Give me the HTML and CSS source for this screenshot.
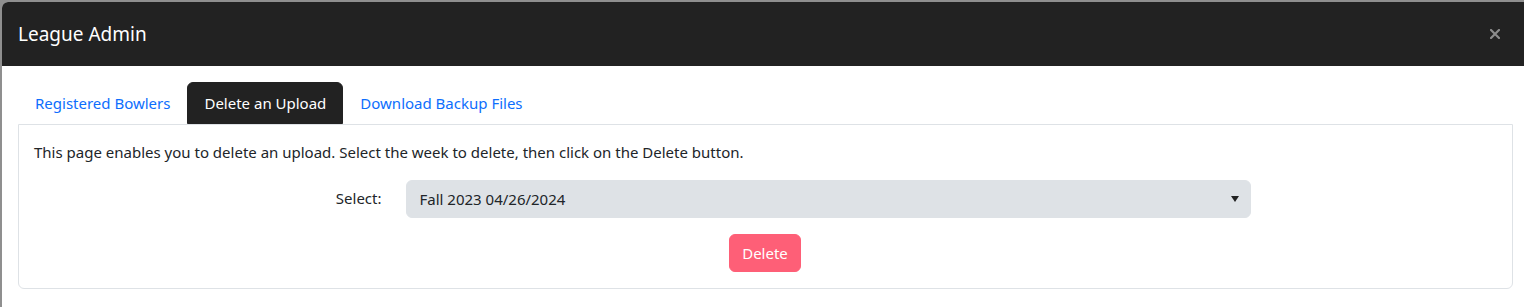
FILE: index.html
```html
<!DOCTYPE html>
<html lang="en">
<head>
<meta charset="utf-8">
<title>League Admin</title>
<link rel="stylesheet" href="styles.css">
</head>
<body>
<div class="modal">
  <div class="modal-header">
    <h5 class="modal-title">League Admin</h5>
    <button class="btn-close" type="button" aria-label="Close">
      <svg viewBox="0 0 10 10" width="10" height="10"><path d="M1 1L9 9M9 1L1 9" stroke="#8c8c8c" stroke-width="2.2" stroke-linecap="square"/></svg>
    </button>
  </div>
  <div class="modal-body">
    <ul class="nav-tabs">
      <li><a class="nav-link" href="#">Registered Bowlers</a></li>
      <li><a class="nav-link active" href="#">Delete an Upload</a></li>
      <li><a class="nav-link" href="#">Download Backup Files</a></li>
    </ul>
    <div class="tab-content">
      <p class="intro">This page enables you to delete an upload. Select the week to delete, then click on the Delete button.</p>
      <div class="form-row">
        <label class="col-label">Select:</label>
        <div class="col-select">
          <div class="form-select">
            <span>Fall 2023 04/26/2024</span>
            <svg class="caret" viewBox="0 0 8 6" width="8" height="6"><path d="M0 0H8L4 6Z" fill="#222"/></svg>
          </div>
        </div>
      </div>
      <div class="actions">
        <button class="btn-delete" type="button">Delete</button>
      </div>
    </div>
  </div>
</div>
</body>
</html>
```
FILE: styles.css
```css
html, body {
  margin: 0;
  padding: 0;
  height: 100%;
  overflow: hidden;
}
body {
  background: #8f8f8f;
  font-family: "Noto Sans", "Open Sans", sans-serif;
  font-size: 15px;
  color: #212529;
}
.modal {
  margin: 2px 0 0 2px;
  width: 1527px;
  height: 320px;
  background: #fff;
  border-top-left-radius: 6px;
  overflow: hidden;
}
.modal-header {
  background: #222222;
  height: 64px;
  box-sizing: border-box;
  padding: 0 16px;
  display: flex;
  align-items: center;
}
.modal-title {
  margin: 0;
  font-size: 19px;
  font-weight: 400;
  color: #ffffff;
  line-height: 30px;
}
.btn-close {
  margin-left: auto;
  margin-right: 6px;
  width: 24px;
  height: 24px;
  padding: 0;
  border: 0;
  background: transparent;
  display: flex;
  align-items: center;
  justify-content: center;
}
.modal-body {
  padding: 16px;
}
.nav-tabs {
  list-style: none;
  margin: 0;
  padding: 0;
  display: flex;
}
.nav-link {
  display: block;
  padding: 8px 16px;
  border: 1px solid transparent;
  border-radius: 6px 6px 0 0;
  line-height: 24px;
  color: #0d6efd;
  text-decoration: none;
}
.nav-link.active {
  background: #222222;
  border-color: #222222;
  color: #ffffff;
}
.tab-content {
  border: 1px solid #dee2e6;
  border-radius: 0 0 6px 6px;
  padding: 15px 16px 16px 15px;
}
.intro {
  margin: 0 0 16px 0;
  line-height: 24px;
}
.form-row {
  display: flex;
  margin: 0 -12px 16px -12px;
}
.col-label {
  box-sizing: border-box;
  flex: 0 0 25%;
  padding: 6px 12px 0 12px;
  text-align: right;
  line-height: 24px;
}
.col-select {
  box-sizing: border-box;
  flex: 0 0 58.5%;
  padding: 0 12px;
}
.form-select {
  height: 38px;
  box-sizing: border-box;
  background: #dee2e6;
  border: 1px solid #dee2e6;
  border-radius: 6px;
  padding: 0 11px 0 13px;
  display: flex;
  align-items: center;
  justify-content: space-between;
}
.caret {
  display: block;
}
.actions {
  display: flex;
  justify-content: center;
}
.btn-delete {
  font-family: inherit;
  font-size: 15px;
  line-height: 24px;
  padding: 6px 12px;
  border: 1px solid #fe5f77;
  background: #fe5f77;
  color: #ffffff;
  border-radius: 6px;
}
```
